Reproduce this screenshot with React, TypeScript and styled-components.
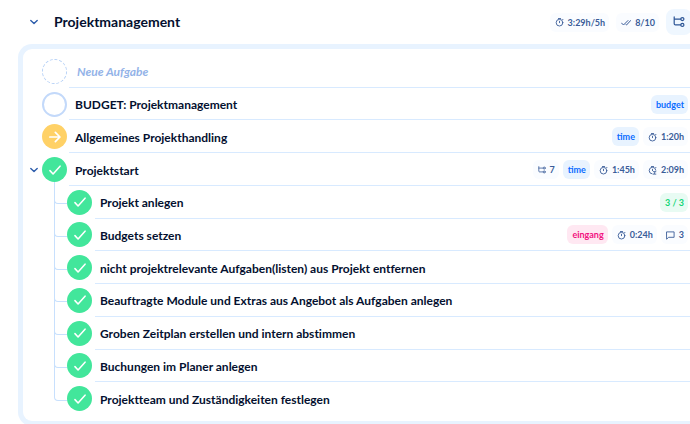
import React from 'react';
import styled, { createGlobalStyle, css } from 'styled-components';

const GlobalStyle = createGlobalStyle`
  * { box-sizing: border-box; }
  body {
    margin: 0;
    background: #fff;
    color: #04102f;
    font-family: Lato, "Open Sans", sans-serif;
    font-variant-ligatures: none;
    overflow: hidden;
  }
`;

const Page = styled.main`
  display: flex;
  flex-direction: column;
`;

const Header = styled.header`
  display: flex;
  align-items: center;
  height: 44px;
  padding-left: 28px;
`;

const Title = styled.h1`
  flex: 1;
  margin: 0 0 0 14px;
  font-size: 14px;
  line-height: 20px;
  font-weight: 700;
`;

const HeaderTags = styled.div`
  display: flex;
  align-items: center;
  gap: 7px;
`;

const Toggle = styled.button`
  display: flex;
  align-items: center;
  justify-content: center;
  width: 12px;
  height: 20px;
  padding: 0;
  border: 0;
  background: none;
  color: #2c5cab;
`;

const ViewButton = styled.button`
  display: flex;
  align-items: center;
  justify-content: center;
  width: 26px;
  height: 26px;
  margin-right: -2px;
  padding: 0;
  border: 0;
  border-radius: 8px;
  background: #eff7ff;
  color: #2c5596;
`;

const Panel = styled.section`
  margin-left: 18px;
  padding: 6px 0;
  border: 5px solid #e8f3ff;
  border-right: 0;
  border-radius: 14px 0 0 14px;
`;

const List = styled.ul`
  display: grid;
  grid-auto-rows: 1fr;
  min-height: 360px;
  margin: 0;
  padding: 0;
  list-style: none;
`;

const Row = styled.li`
  display: flex;
  align-items: center;
  padding-left: 5px;
`;

const Gutter = styled.div`
  display: flex;
  flex: none;
  width: 14px;
`;

const Branch = styled.div<{ $last: boolean }>`
  position: relative;
  flex: none;
  align-self: stretch;
  width: 13px;
  margin-left: 12px;

  &::before {
    content: '';
    position: absolute;
    inset: -4px 0 calc(50% - 2px) 0;
    border: solid #c8e0fd;
    border-width: 0 0 1px 1px;
    border-bottom-left-radius: 4px;
  }

  ${(p) => !p.$last && css`
    &::after {
      content: '';
      position: absolute;
      inset: 0 auto 0 0;
      border-left: 1px solid #c8e0fd;
    }
  `}
`;

type Status = 'new' | 'open' | 'active' | 'done';

const statusStyles = {
  new: css`border: 1px dashed #b4d0f7; background: #fff;`,
  open: css`border: 2px solid #c3d9fa; background: #fff;`,
  active: css`background: #ffd166;`,
  done: css`background: #42e69b;`,
};

const StatusButton = styled.button<{ $status: Status }>`
  position: relative;
  display: flex;
  align-items: center;
  justify-content: center;
  flex: none;
  width: 25px;
  height: 25px;
  padding: 0;
  border: 0;
  border-radius: 50%;
  color: #fff;
  ${(p) => statusStyles[p.$status]}
`;

const Body = styled.div<{ $divided: boolean; $nested: boolean }>`
  display: flex;
  align-items: center;
  align-self: stretch;
  flex: 1;
  min-width: 0;
  margin-left: ${(p) => (p.$nested ? 3 : 2)}px;
  padding-top: 1px;
  padding-right: 2px;
  padding-left: ${(p) => (p.$nested ? 5 : 6)}px;
  border-bottom: 1px solid ${(p) => (p.$divided ? '#d8eaff' : 'transparent')};
`;

const Label = styled.span`
  flex: 1;
  padding-top: 2px;
  font-size: 12px;
  line-height: 16px;
  font-weight: 700;
  white-space: nowrap;
`;

const NewTask = styled.input`
  flex: 1;
  min-width: 0;
  padding: 2px 0 0 2px;
  border: 0;
  outline: 0;
  background: none;
  font: italic 700 12px/16px Lato, "Open Sans", sans-serif;

  &::placeholder { color: #93b3e8; opacity: 1; }
`;

const Tags = styled.div`
  display: flex;
  gap: 4px;
`;

type Tone = 'plain' | 'blue' | 'green' | 'pink';

const tones = {
  plain: css`background: #fafcff; color: #3a5c99;`,
  blue: css`background: #e8f3ff; color: #0a6cff;`,
  green: css`background: #e8fbf3; color: #12d676;`,
  pink: css`background: #ffe8f2; color: #f2127f;`,
};

const TagBox = styled.span<{ $tone: Tone }>`
  display: flex;
  align-items: center;
  gap: 4px;
  height: 19px;
  padding: 1px 4px 0 5px;
  border-radius: 6px;
  font: 700 9px/12px Lato, "Open Sans", sans-serif;
  white-space: nowrap;
  ${(p) => tones[p.$tone]}
`;

const Icon = ({ size = 9, width = 1, children }: { size?: number; width?: number; children: React.ReactNode }) => (
  <svg width={size} height={size} viewBox="0 0 10 10" fill="none" stroke="currentColor" strokeWidth={width} strokeLinecap="round" strokeLinejoin="round" aria-hidden="true">
    {children}
  </svg>
);

const Timer = () => (
  <Icon><circle cx="5" cy="5.2" r="3.7" /><path d="M3.8 .6h2.4M5 3.6v1.6M8.4 1.4l.5.5" /></Icon>
);
const TimerSum = () => (
  <Icon><path d="M4.6 8.8A3.7 3.7 0 1 1 8.7 4.7M3.8.6h2.4M5 3.6v1.6M8.4 1.4l.5.5M6.3 6.3h2.4M6.3 9h2.4M6.5 6.4l1.2 1.2-1.2 1.3" /></Icon>
);
const Checks = () => (
  <Icon size={10}><path d="M.5 5l2 2L7 2.5M5 6.7l.5.3L9.7 2.5" /></Icon>
);
const Tree = ({ size = 8 }: { size?: number }) => (
  <Icon size={size}><path d="M1 .8v5.6q0 1 1 1h4.4M1 2.6h5.4" /><circle cx="7.8" cy="2.6" r="1.3" /><circle cx="7.8" cy="7.4" r="1.3" /></Icon>
);
const Comment = () => (
  <Icon><path d="M1 1h8v6H3L1 8.8z" /></Icon>
);
const Chevron = () => (
  <Icon size={8} width={1.7}><path d="M1 3l4 4 4-4" /></Icon>
);

const icons = { timer: Timer, sum: TimerSum, checks: Checks, tree: Tree, comment: Comment };

interface TagData { text: string; tone?: Tone; icon?: keyof typeof icons }

const Tag = ({ text, tone = 'plain', icon }: TagData) => {
  const Glyph = icon && icons[icon];
  return <TagBox $tone={tone}>{Glyph && <Glyph />}{text}</TagBox>;
};

interface Task { name: string; status: Status; nested?: boolean; expandable?: boolean; tags?: TagData[] }

const tasks: Task[] = [
  { name: 'BUDGET: Projektmanagement', status: 'open', tags: [{ text: 'budget', tone: 'blue' }] },
  { name: 'Allgemeines Projekthandling', status: 'active', tags: [{ text: 'time', tone: 'blue' }, { text: '1:20h', icon: 'timer' }] },
  {
    name: 'Projektstart', status: 'done', expandable: true,
    tags: [{ text: '7', icon: 'tree' }, { text: 'time', tone: 'blue' }, { text: '1:45h', icon: 'timer' }, { text: '2:09h', icon: 'sum' }],
  },
  { name: 'Projekt anlegen', status: 'done', nested: true, tags: [{ text: '3 / 3', tone: 'green' }] },
  {
    name: 'Budgets setzen', status: 'done', nested: true,
    tags: [{ text: 'eingang', tone: 'pink' }, { text: '0:24h', icon: 'timer' }, { text: '3', icon: 'comment' }],
  },
  { name: 'nicht projektrelevante Aufgaben(listen) aus Projekt entfernen', status: 'done', nested: true },
  { name: 'Beauftragte Module und Extras aus Angebot als Aufgaben anlegen', status: 'done', nested: true },
  { name: 'Groben Zeitplan erstellen und intern abstimmen', status: 'done', nested: true },
  { name: 'Buchungen im Planer anlegen', status: 'done', nested: true },
  { name: 'Projektteam und Zuständigkeiten festlegen', status: 'done', nested: true },
];

const StatusMark = ({ status }: { status: Status }) => {
  if (status === 'done') return <Icon size={12} width={1.3}><path d="M.8 5.5l2.6 2.8L9.2 1.8" /></Icon>;
  if (status === 'active') return <Icon size={12} width={1.4}><path d="M.7 5h8.4M5.3 1.2L9.1 5 5.3 8.8" /></Icon>;
  return null;
};

export default function App() {
  return (
    <Page>
      <GlobalStyle />
      <Header>
        <Toggle aria-label="Projektmanagement einklappen"><Chevron /></Toggle>
        <Title>Projektmanagement</Title>
        <HeaderTags>
          <Tag text="3:29h/5h" icon="timer" />
          <Tag text="8/10" icon="checks" />
          <ViewButton aria-label="Unteraufgaben"><Tree size={12} /></ViewButton>
        </HeaderTags>
      </Header>
      <Panel>
        <List>
          <Row>
            <Gutter />
            <StatusButton $status="new" aria-label="Status" />
            <Body $divided $nested={false}>
              <NewTask placeholder="Neue Aufgabe" aria-label="Neue Aufgabe" />
            </Body>
          </Row>
          {tasks.map((task, i) => (
            <Row key={task.name}>
              <Gutter>
                {task.expandable && <Toggle aria-label={`${task.name} einklappen`}><Chevron /></Toggle>}
              </Gutter>
              {task.nested && <Branch $last={i === tasks.length - 1} />}
              <StatusButton $status={task.status} aria-label={`Status: ${task.name}`}>
                <StatusMark status={task.status} />
              </StatusButton>
              <Body $divided={i < tasks.length - 1} $nested={!!task.nested}>
                <Label>{task.name}</Label>
                {task.tags && <Tags>{task.tags.map((tag) => <Tag key={tag.text} {...tag} />)}</Tags>}
              </Body>
            </Row>
          ))}
        </List>
      </Panel>
    </Page>
  );
}
